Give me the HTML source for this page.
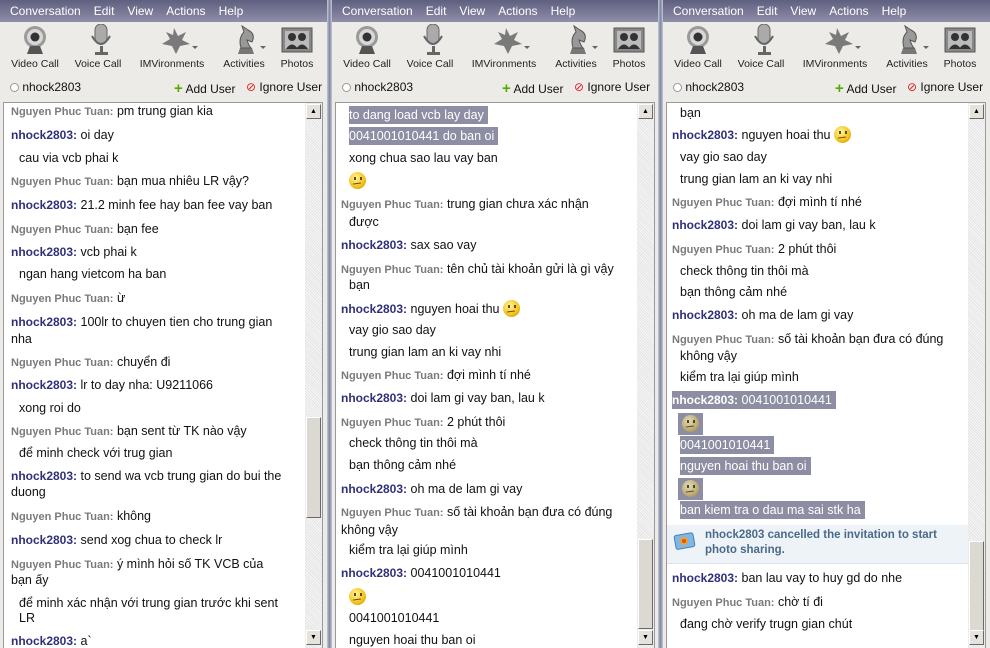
<!DOCTYPE html>
<html><head><meta charset="utf-8"><style>
*{margin:0;padding:0;box-sizing:border-box}
body{width:990px;height:648px;overflow:hidden;background:#d6d3cc;font-family:"Liberation Sans","DejaVu Sans",sans-serif;position:relative}
.p{position:absolute;top:0;height:648px;width:327px;background:#ecebe7;overflow:hidden}
.menu{position:absolute;left:0;top:0;right:0;height:22px;background:linear-gradient(#5f5f80,#8f8fa9);color:#fff;font-size:12px;line-height:22px;white-space:nowrap}
.menu span{margin-left:10px;margin-right:3px}
.tb{position:absolute;top:58px;font-size:10.5px;color:#222;transform:translateX(-50%);white-space:nowrap}
.ic{position:absolute;top:24px}
.ur{position:absolute;top:80px;font-size:12px;color:#111;white-space:nowrap}
.chat{position:absolute;top:102px;left:3px;width:320px;height:560px;background:#fff;border:1px solid #9a9a9a;overflow:hidden}
.sb{position:absolute;right:0;top:0;width:17px;height:560px;background:repeating-linear-gradient(45deg,#e4e4e4 0 1px,#f6f6f6 1px 2px)}
.up,.dn{position:absolute;left:1px;width:15px;height:15px;background:#e6e3dc;border:1px solid;border-color:#fff #6a6a6a #6a6a6a #fff;font-size:7px;text-align:center;line-height:13px;color:#000}
.th{position:absolute;left:1px;width:15px;background:#dcd9d2;border:1px solid;border-color:#fff #6a6a6a #6a6a6a #fff}
.l{position:absolute;font-size:12.5px;line-height:17px;color:#111;white-space:nowrap}
.n{font-weight:bold;color:#30307a;font-size:12px}
.g{font-weight:bold;color:#7a7a7a;font-size:11px}
.h{background:#8d8da3;color:#fff;padding:0 4px 0 0;display:inline-block;line-height:18px;margin-top:-1px}
.e{display:inline-block;width:17px;height:17px;border-radius:50%;background:radial-gradient(circle at 40% 35%,#fff6a0,#f2c019 60%,#b98a10);vertical-align:-4px;position:relative}
.e:after{content:"";position:absolute;left:4px;top:11px;width:8px;height:2px;border-top:1px solid #6b4a00;transform:rotate(-8deg)}
.e:before{content:"";position:absolute;left:5px;top:5px;width:2px;height:3px;background:#6b4a00;box-shadow:6px 0 0 #6b4a00}
.eh{padding:2px 4px;background:#8d8da3;display:inline-block}
.eh .e{filter:grayscale(.6) brightness(.9)}
.sep{position:absolute;top:0;height:648px;width:5px;background:linear-gradient(90deg,#c7c9d6,#7d849f,#c7c9d6)}
</style></head><body>

<div class="p" style="left:0">
 <div class="menu"><span>Conversation</span><span>Edit</span><span>View</span><span>Actions</span><span>Help</span></div>
 <svg class="ic" style="left:20px" width="300" height="34">
  <g><circle cx="15" cy="13" r="11" fill="#9a9a9a"/><circle cx="15" cy="13" r="8" fill="#d8d8d8"/><circle cx="15" cy="13" r="4.5" fill="#333"/><path d="M7 30 L10 22 H20 L23 30 Z" fill="#555"/></g>
  <g transform="translate(70,0)"><rect x="5" y="0" width="12" height="20" rx="6" fill="#aaa" stroke="#666"/><path d="M2 12 Q11 28 20 12" stroke="#666" fill="none" stroke-width="2"/><rect x="10" y="22" width="3" height="6" fill="#666"/><rect x="5" y="28" width="13" height="3" fill="#666"/></g>
  <g transform="translate(140,0)"><path d="M14 4 L18 12 L26 8 L22 16 L30 20 L20 22 L16 30 L12 22 L2 20 L10 15 L6 8 L13 11 Z" fill="#7a7a7a"/><path d="M32 22 L38 22 L35 25 Z" fill="#666"/></g>
  <g transform="translate(210,0)"><path d="M8 30 H24 L22 24 H10 Z" fill="#777"/><path d="M11 24 Q8 14 14 8 L12 2 L18 6 Q26 10 22 18 L17 16 Q19 22 21 24 Z" fill="#999" stroke="#555"/><path d="M30 22 L36 22 L33 25 Z" fill="#666"/></g>
  <g transform="translate(262,0)"><rect x="0" y="4" width="30" height="24" fill="#888" stroke="#555"/><rect x="3" y="7" width="24" height="18" fill="#bbb"/><circle cx="10" cy="13" r="4" fill="#333"/><circle cx="20" cy="13" r="4" fill="#333"/><path d="M4 25 Q10 16 16 25 Z M14 25 Q20 16 26 25Z" fill="#333"/></g>
 </svg>
 <div class="tb" style="left:35px">Video Call</div><div class="tb" style="left:98px">Voice Call</div><div class="tb" style="left:172px">IMVironments</div><div class="tb" style="left:244px">Activities</div><div class="tb" style="left:297px">Photos</div>
 <div class="ur" style="left:10px"><span style="display:inline-block;width:9px;height:9px;border:1px solid #999;border-radius:50%;background:#fff;vertical-align:-1px"></span> nhock2803</div>
 <div class="ur" style="left:174px"><b style="color:#5a0;font-size:15px">+</b> Add User</div>
 <div class="ur" style="left:246px"><span style="color:#d22">⊘</span> Ignore User</div>
 <div class="chat">
  <div class="l" style="left:7px;top:0px"><span class="g">Nguyen Phuc Tuan:</span> pm trung gian kia</div>
  <div class="l" style="left:7px;top:24px"><span class="n">nhock2803:</span> oi day</div>
  <div class="l" style="left:15px;top:47px">cau via vcb phai k</div>
  <div class="l" style="left:7px;top:70px"><span class="g">Nguyen Phuc Tuan:</span> bạn mua nhiêu LR vậy?</div>
  <div class="l" style="left:7px;top:94px"><span class="n">nhock2803:</span> 21.2 minh fee hay ban fee vay ban</div>
  <div class="l" style="left:7px;top:118px"><span class="g">Nguyen Phuc Tuan:</span> bạn fee</div>
  <div class="l" style="left:7px;top:141px"><span class="n">nhock2803:</span> vcb phai k</div>
  <div class="l" style="left:15px;top:163px">ngan hang vietcom ha ban</div>
  <div class="l" style="left:7px;top:187px"><span class="g">Nguyen Phuc Tuan:</span> ừ</div>
  <div class="l" style="left:7px;top:211px"><span class="n">nhock2803:</span> 100lr to chuyen tien cho trung gian</div>
  <div class="l" style="left:7px;top:228px">nha</div>
  <div class="l" style="left:7px;top:251px"><span class="g">Nguyen Phuc Tuan:</span> chuyển đi</div>
  <div class="l" style="left:7px;top:274px"><span class="n">nhock2803:</span> lr to day nha: U9211066</div>
  <div class="l" style="left:15px;top:297px">xong roi do</div>
  <div class="l" style="left:7px;top:320px"><span class="g">Nguyen Phuc Tuan:</span> bạn sent từ TK nào vậy</div>
  <div class="l" style="left:15px;top:342px">để minh check với trug gian</div>
  <div class="l" style="left:7px;top:365px"><span class="n">nhock2803:</span> to send wa vcb trung gian do bui the</div>
  <div class="l" style="left:7px;top:381px">duong</div>
  <div class="l" style="left:7px;top:405px"><span class="g">Nguyen Phuc Tuan:</span> không</div>
  <div class="l" style="left:7px;top:429px"><span class="n">nhock2803:</span> send xog chua to check lr</div>
  <div class="l" style="left:7px;top:453px"><span class="g">Nguyen Phuc Tuan:</span> ý mình hỏi số TK VCB của</div>
  <div class="l" style="left:7px;top:469px">bạn ấy</div>
  <div class="l" style="left:15px;top:492px">để minh xác nhận với trung gian trước khi sent</div>
  <div class="l" style="left:15px;top:507px">LR</div>
  <div class="l" style="left:7px;top:530px"><span class="n">nhock2803:</span> a`</div>
  <div class="sb"><div class="up" style="top:1px">▲</div><div class="th" style="top:314px;height:101px"></div><div class="dn" style="top:527px">▼</div></div>
 </div>
</div>
<div class="sep" style="left:327px"></div>

<div class="p" style="left:332px">
 <div class="menu"><span>Conversation</span><span>Edit</span><span>View</span><span>Actions</span><span>Help</span></div>
 <svg class="ic" style="left:20px" width="300" height="34">
  <g><circle cx="15" cy="13" r="11" fill="#9a9a9a"/><circle cx="15" cy="13" r="8" fill="#d8d8d8"/><circle cx="15" cy="13" r="4.5" fill="#333"/><path d="M7 30 L10 22 H20 L23 30 Z" fill="#555"/></g>
  <g transform="translate(70,0)"><rect x="5" y="0" width="12" height="20" rx="6" fill="#aaa" stroke="#666"/><path d="M2 12 Q11 28 20 12" stroke="#666" fill="none" stroke-width="2"/><rect x="10" y="22" width="3" height="6" fill="#666"/><rect x="5" y="28" width="13" height="3" fill="#666"/></g>
  <g transform="translate(140,0)"><path d="M14 4 L18 12 L26 8 L22 16 L30 20 L20 22 L16 30 L12 22 L2 20 L10 15 L6 8 L13 11 Z" fill="#7a7a7a"/><path d="M32 22 L38 22 L35 25 Z" fill="#666"/></g>
  <g transform="translate(210,0)"><path d="M8 30 H24 L22 24 H10 Z" fill="#777"/><path d="M11 24 Q8 14 14 8 L12 2 L18 6 Q26 10 22 18 L17 16 Q19 22 21 24 Z" fill="#999" stroke="#555"/><path d="M30 22 L36 22 L33 25 Z" fill="#666"/></g>
  <g transform="translate(262,0)"><rect x="0" y="4" width="30" height="24" fill="#888" stroke="#555"/><rect x="3" y="7" width="24" height="18" fill="#bbb"/><circle cx="10" cy="13" r="4" fill="#333"/><circle cx="20" cy="13" r="4" fill="#333"/><path d="M4 25 Q10 16 16 25 Z M14 25 Q20 16 26 25Z" fill="#333"/></g>
 </svg>
 <div class="tb" style="left:35px">Video Call</div><div class="tb" style="left:98px">Voice Call</div><div class="tb" style="left:172px">IMVironments</div><div class="tb" style="left:244px">Activities</div><div class="tb" style="left:297px">Photos</div>
 <div class="ur" style="left:10px"><span style="display:inline-block;width:9px;height:9px;border:1px solid #999;border-radius:50%;background:#fff;vertical-align:-1px"></span> nhock2803</div>
 <div class="ur" style="left:170px"><b style="color:#5a0;font-size:15px">+</b> Add User</div>
 <div class="ur" style="left:242px"><span style="color:#d22">⊘</span> Ignore User</div>
 <div class="chat">
  <div class="l" style="left:13px;top:4px"><span class="h">to dang load vcb lay day </span></div>
  <div class="l" style="left:13px;top:25px"><span class="h">0041001010441 do ban oi</span></div>
  <div class="l" style="left:13px;top:47px">xong chua sao lau vay ban</div>
  <div class="l" style="left:13px;top:69px"><span class="e"></span></div>
  <div class="l" style="left:5px;top:93px"><span class="g">Nguyen Phuc Tuan:</span> trung gian chưa xác nhận</div>
  <div class="l" style="left:13px;top:111px">được</div>
  <div class="l" style="left:5px;top:134px"><span class="n">nhock2803:</span> sax sao vay</div>
  <div class="l" style="left:5px;top:158px"><span class="g">Nguyen Phuc Tuan:</span> tên chủ tài khoản gửi là gì vậy</div>
  <div class="l" style="left:13px;top:174px">bạn</div>
  <div class="l" style="left:5px;top:197px"><span class="n">nhock2803:</span> nguyen hoai thu <span class="e"></span></div>
  <div class="l" style="left:13px;top:219px">vay gio sao day</div>
  <div class="l" style="left:13px;top:241px">trung gian lam an ki vay nhi</div>
  <div class="l" style="left:5px;top:264px"><span class="g">Nguyen Phuc Tuan:</span> đợi mình tí nhé</div>
  <div class="l" style="left:5px;top:287px"><span class="n">nhock2803:</span> doi lam gi vay ban, lau k</div>
  <div class="l" style="left:5px;top:311px"><span class="g">Nguyen Phuc Tuan:</span> 2 phút thôi</div>
  <div class="l" style="left:13px;top:332px">check thông tin thôi mà</div>
  <div class="l" style="left:13px;top:354px">bạn thông cảm nhé</div>
  <div class="l" style="left:5px;top:378px"><span class="n">nhock2803:</span> oh ma de lam gi vay</div>
  <div class="l" style="left:5px;top:401px"><span class="g">Nguyen Phuc Tuan:</span> số tài khoản bạn đưa có đúng</div>
  <div class="l" style="left:5px;top:419px">không vậy</div>
  <div class="l" style="left:13px;top:439px">kiểm tra lại giúp mình</div>
  <div class="l" style="left:5px;top:462px"><span class="n">nhock2803:</span> 0041001010441</div>
  <div class="l" style="left:13px;top:485px"><span class="e"></span></div>
  <div class="l" style="left:13px;top:507px">0041001010441</div>
  <div class="l" style="left:13px;top:529px">nguyen hoai thu ban oi</div>
  <div class="sb"><div class="up" style="top:1px">▲</div><div class="th" style="top:436px;height:90px"></div><div class="dn" style="top:527px">▼</div></div>
 </div>
</div>
<div class="sep" style="left:658px"></div>

<div class="p" style="left:663px">
 <div class="menu"><span>Conversation</span><span>Edit</span><span>View</span><span>Actions</span><span>Help</span></div>
 <svg class="ic" style="left:20px" width="300" height="34">
  <g><circle cx="15" cy="13" r="11" fill="#9a9a9a"/><circle cx="15" cy="13" r="8" fill="#d8d8d8"/><circle cx="15" cy="13" r="4.5" fill="#333"/><path d="M7 30 L10 22 H20 L23 30 Z" fill="#555"/></g>
  <g transform="translate(70,0)"><rect x="5" y="0" width="12" height="20" rx="6" fill="#aaa" stroke="#666"/><path d="M2 12 Q11 28 20 12" stroke="#666" fill="none" stroke-width="2"/><rect x="10" y="22" width="3" height="6" fill="#666"/><rect x="5" y="28" width="13" height="3" fill="#666"/></g>
  <g transform="translate(140,0)"><path d="M14 4 L18 12 L26 8 L22 16 L30 20 L20 22 L16 30 L12 22 L2 20 L10 15 L6 8 L13 11 Z" fill="#7a7a7a"/><path d="M32 22 L38 22 L35 25 Z" fill="#666"/></g>
  <g transform="translate(210,0)"><path d="M8 30 H24 L22 24 H10 Z" fill="#777"/><path d="M11 24 Q8 14 14 8 L12 2 L18 6 Q26 10 22 18 L17 16 Q19 22 21 24 Z" fill="#999" stroke="#555"/><path d="M30 22 L36 22 L33 25 Z" fill="#666"/></g>
  <g transform="translate(262,0)"><rect x="0" y="4" width="30" height="24" fill="#888" stroke="#555"/><rect x="3" y="7" width="24" height="18" fill="#bbb"/><circle cx="10" cy="13" r="4" fill="#333"/><circle cx="20" cy="13" r="4" fill="#333"/><path d="M4 25 Q10 16 16 25 Z M14 25 Q20 16 26 25Z" fill="#333"/></g>
 </svg>
 <div class="tb" style="left:35px">Video Call</div><div class="tb" style="left:98px">Voice Call</div><div class="tb" style="left:172px">IMVironments</div><div class="tb" style="left:244px">Activities</div><div class="tb" style="left:297px">Photos</div>
 <div class="ur" style="left:10px"><span style="display:inline-block;width:9px;height:9px;border:1px solid #999;border-radius:50%;background:#fff;vertical-align:-1px"></span> nhock2803</div>
 <div class="ur" style="left:172px"><b style="color:#5a0;font-size:15px">+</b> Add User</div>
 <div class="ur" style="left:244px"><span style="color:#d22">⊘</span> Ignore User</div>
 <div class="chat">
  <div class="l" style="left:13px;top:2px">bạn</div>
  <div class="l" style="left:5px;top:23px"><span class="n">nhock2803:</span> nguyen hoai thu <span class="e"></span></div>
  <div class="l" style="left:13px;top:46px">vay gio sao day</div>
  <div class="l" style="left:13px;top:68px">trung gian lam an ki vay nhi</div>
  <div class="l" style="left:5px;top:91px"><span class="g">Nguyen Phuc Tuan:</span> đợi mình tí nhé</div>
  <div class="l" style="left:5px;top:114px"><span class="n">nhock2803:</span> doi lam gi vay ban, lau k</div>
  <div class="l" style="left:5px;top:138px"><span class="g">Nguyen Phuc Tuan:</span> 2 phút thôi</div>
  <div class="l" style="left:13px;top:160px">check thông tin thôi mà</div>
  <div class="l" style="left:13px;top:181px">bạn thông cảm nhé</div>
  <div class="l" style="left:5px;top:204px"><span class="n">nhock2803:</span> oh ma de lam gi vay</div>
  <div class="l" style="left:5px;top:228px"><span class="g">Nguyen Phuc Tuan:</span> số tài khoản bạn đưa có đúng</div>
  <div class="l" style="left:13px;top:245px">không vậy</div>
  <div class="l" style="left:13px;top:266px">kiểm tra lại giúp mình</div>
  <div class="l" style="left:5px;top:289px"><span class="h"><span class="n" style="color:#fff">nhock2803:</span> 0041001010441 </span></div>
  <div class="l" style="left:11px;top:310px"><span class="eh"><span class="e"></span></span></div>
  <div class="l" style="left:13px;top:334px"><span class="h">0041001010441 </span></div>
  <div class="l" style="left:13px;top:355px"><span class="h">nguyen hoai thu ban oi </span></div>
  <div class="l" style="left:11px;top:375px"><span class="eh"><span class="e"></span></span></div>
  <div class="l" style="left:13px;top:399px"><span class="h">ban kiem tra o dau ma sai stk ha </span></div>
  <div style="position:absolute;left:0;top:422px;width:302px;height:39px;background:#eef3f8;border-bottom:1px solid #dde3ea"></div>
  <svg style="position:absolute;left:6px;top:428px" width="24" height="20"><rect x="2" y="3" width="19" height="14" rx="2" fill="#7fb8e8" stroke="#4a7fb0" transform="rotate(-10 12 10)"/><circle cx="11" cy="10" r="4" fill="#f4a020"/><circle cx="11" cy="10" r="2" fill="#e05020"/></svg>
  <div class="l" style="left:38px;top:425px;font-size:11.5px;font-weight:bold;color:#4a6a88;line-height:15px">nhock2803 cancelled the invitation to start<br>photo sharing.</div>
  <div class="l" style="left:5px;top:467px"><span class="n">nhock2803:</span> ban lau vay to huy gd do nhe</div>
  <div class="l" style="left:5px;top:491px"><span class="g">Nguyen Phuc Tuan:</span> chờ tí đi</div>
  <div class="l" style="left:13px;top:513px">đang chờ verify trugn gian chút</div>
  <div class="sb"><div class="up" style="top:1px">▲</div><div class="th" style="top:438px;height:91px"></div><div class="dn" style="top:527px">▼</div></div>
 </div>
</div>
</body></html>
